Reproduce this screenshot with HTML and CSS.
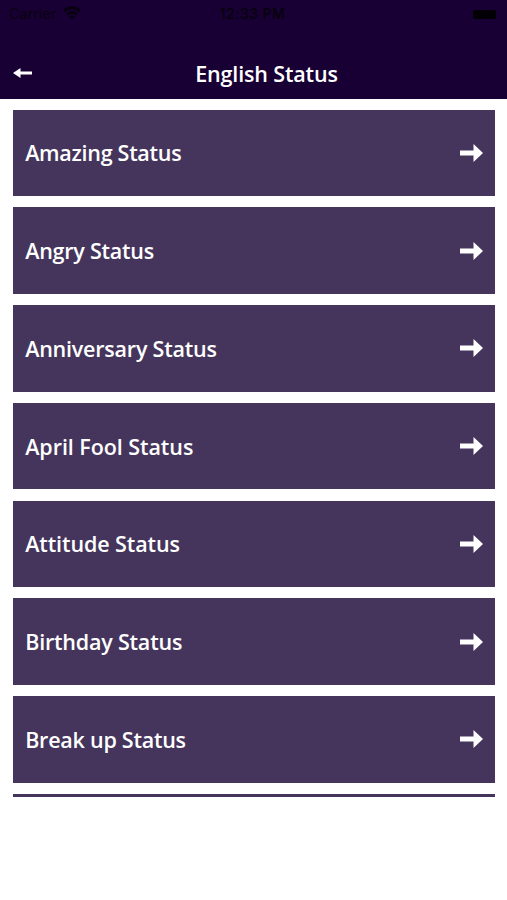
FILE: index.html
```html
<!DOCTYPE html>
<html lang="en">
<head>
<meta charset="utf-8">
<title>English Status</title>
<link rel="stylesheet" href="styles.css">
</head>
<body>
<svg class="defs" aria-hidden="true">
  <symbol id="arrow" viewBox="0 0 23 18"><path d="M0 6.6H13.5V0L23 9L13.5 18V11.4H0Z"/></symbol>
</svg>
<header class="header">
  <div class="statusbar">
    <div class="carrier"><span>Carrier</span>
      <svg class="wifi" viewBox="0 0 18 14"><path d="M0 4.4Q9-3.8 18 4.4L16.2 6.3Q9-.1 1.8 6.3ZM3 7.5Q9 2.1 15 7.5L13.1 9.4Q9 5.9 4.9 9.4ZM6.1 10.6Q9 8.2 11.9 10.6L9 13.6Z"/></svg>
    </div>
    <div class="time">12:33 PM</div>
    <div class="battery"></div>
  </div>
  <div class="nav">
    <svg class="back" viewBox="0 0 19 10"><path d="M0 5L7.5 0V3.6H19V6.4H7.5V10Z"/></svg>
    <h1 class="title">English Status</h1>
  </div>
</header>
<main class="list">
  <div class="row"><span class="label amazing">Amazing Status</span><svg class="arrow"><use href="#arrow"/></svg></div>
  <div class="row"><span class="label angry">Angry Status</span><svg class="arrow"><use href="#arrow"/></svg></div>
  <div class="row"><span class="label anniversary">Anniversary Status</span><svg class="arrow"><use href="#arrow"/></svg></div>
  <div class="row"><span class="label april">April Fool Status</span><svg class="arrow"><use href="#arrow"/></svg></div>
  <div class="row"><span class="label attitude">Attitude Status</span><svg class="arrow"><use href="#arrow"/></svg></div>
  <div class="row"><span class="label birthday">Birthday Status</span><svg class="arrow"><use href="#arrow"/></svg></div>
  <div class="row"><span class="label breakup">Break up Status</span><svg class="arrow"><use href="#arrow"/></svg></div>
  <div class="row"></div>
</main>
</body>
</html>
```
FILE: styles.css
```css
* { box-sizing: border-box; }
body { margin: 0; background: #fff; font-family: "Trebuchet MS", "Open Sans", sans-serif; }
.defs { display: none; }
.header { height: 98.5px; background: #180034; }
.statusbar {
  display: grid;
  grid-template-columns: 1fr auto 1fr;
  align-items: center;
  height: 28px;
  padding: 0 11px 0 9px;
  color: #08000f;
  font: 14px/28px Inter, sans-serif;
}
.carrier { display: flex; align-items: center; gap: 7px; letter-spacing: .2px; }
.wifi { width: 18px; height: 14px; fill: #080010; margin-top: -2px; }
.time { font-weight: 600; letter-spacing: .4px; }
.battery { justify-self: end; width: 23px; height: 9px; border-radius: 2px; background: #020005; }
.nav {
  display: grid;
  grid-template-columns: 19px 1fr;
  align-items: center;
  height: 50px;
  margin-top: 20px;
  padding: 0 6px 0 13px;
}
.back { width: 19px; height: 10px; fill: #fff; margin-top: -1px; }
.title {
  margin: 0;
  padding-top: 1px;
  text-align: center;
  color: #fff;
  font-size: 21.5px;
  font-weight: 600;
  line-height: 30px;
  letter-spacing: -.15px;
}
.list {
  display: flex;
  flex-direction: column;
  gap: 11.2px;
  height: 698px;
  padding: 11.2px 12.3px 0 13.2px;
  overflow: hidden;
}
.row {
  display: flex;
  flex: none;
  align-items: center;
  justify-content: space-between;
  height: 86.55px;
  padding: 0 11.5px 0 12px;
  background: #45355c;
  color: #fff;
  font-size: 21.5px;
  font-weight: 600;
  line-height: 30px;
  white-space: nowrap;
}
.label { padding-top: 1px; }
.amazing { letter-spacing: -.28px; }
.angry { letter-spacing: -.24px; }
.anniversary { letter-spacing: -.22px; }
.april { letter-spacing: -.06px; }
.attitude { letter-spacing: -.1px; }
.birthday { letter-spacing: -.2px; }
.breakup { letter-spacing: -.24px; }
.arrow { width: 23px; height: 18px; fill: #fff; }
```
